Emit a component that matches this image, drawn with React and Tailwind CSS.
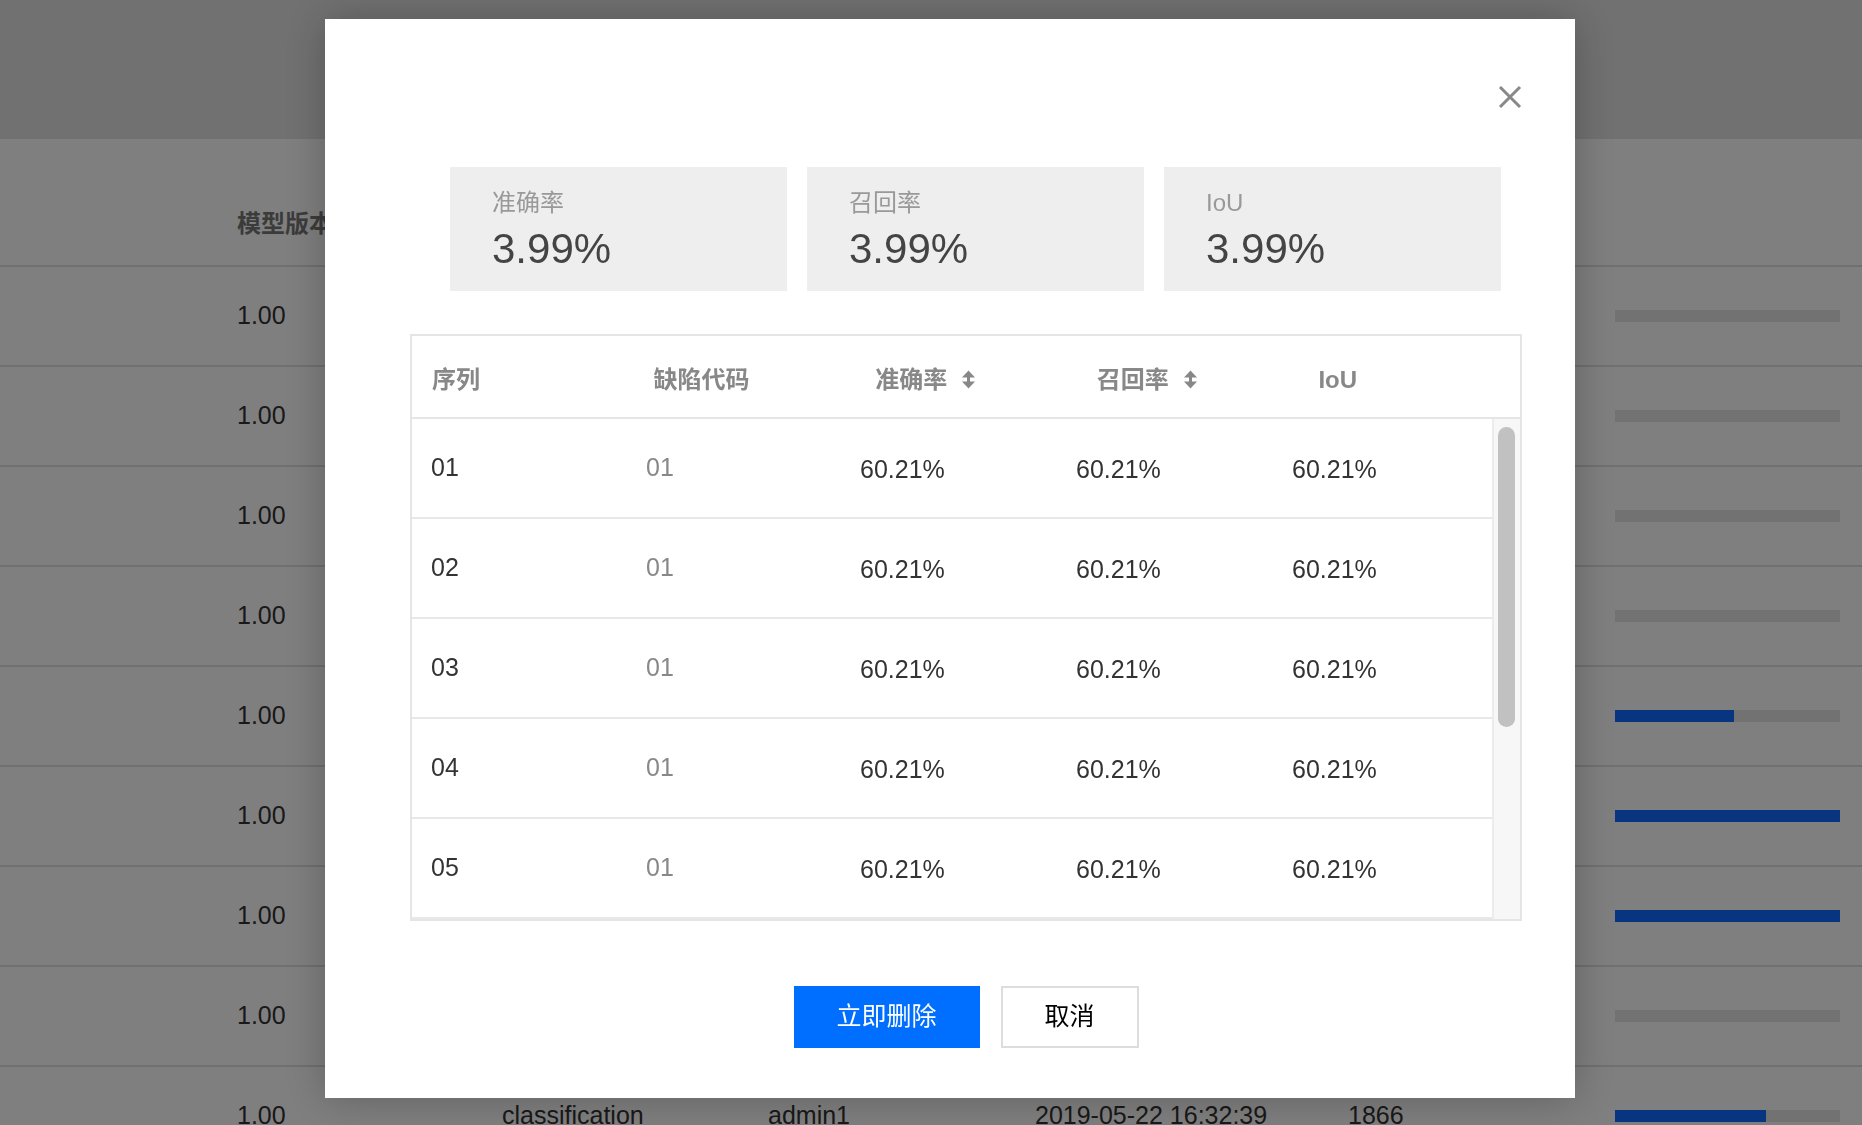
import React from 'react';

const bgRows = [
  { v: '1.00', bar: 0 },
  { v: '1.00', bar: 0 },
  { v: '1.00', bar: 0 },
  { v: '1.00', bar: 0 },
  { v: '1.00', bar: 53 },
  { v: '1.00', bar: 100 },
  { v: '1.00', bar: 100 },
  { v: '1.00', bar: 0 },
  { v: '1.00', bar: 67 },
];

const rows = ['01', '02', '03', '04', '05', '06', '07', '08'];

const SortIcon = () => (
  <svg width="13" height="19" viewBox="0 0 13 19" className="ml-[15px] shrink-0">
    <polygon points="0,7.5 6.5,0.5 13,7.5" fill="#888" />
    <rect x="5" y="6" width="3" height="7" fill="#888" />
    <polygon points="0,11.5 6.5,18.5 13,11.5" fill="#888" />
  </svg>
);

const StatCard = ({ label, value }) => (
  <div className="w-[337px] h-[124px] bg-[#eeeeee] pl-[42px] pt-[20px] flex flex-col">
    <div className="text-[24px] leading-[32px] text-[#999]">{label}</div>
    <div className="mt-[9px] text-[42px] leading-[42px] text-[#444]">{value}</div>
  </div>
);

const App = () => {
  return (
    <div
      className="relative w-full h-screen overflow-hidden bg-white"
      style={{ fontFamily: '"Liberation Sans", "Noto Sans CJK SC", sans-serif' }}
    >
      {/* page behind the dialog */}
      <div className="h-[139px] bg-[#e3e3e3]" />
      <div className="pt-[44px]">
        <div className="h-[84px] flex items-center pl-[237px] border-b-2 border-[#e0e0e0]">
          <span className="text-[24px] font-bold text-[#777]">模型版本</span>
        </div>
        {bgRows.map((r, i) => (
          <div key={i} className="h-[100px] flex items-center pl-[237px] border-b-2 border-[#e0e0e0] text-[25px] text-[#333]">
            <div className="w-[265px]">{r.v}</div>
            <div className="w-[266px]">classification</div>
            <div className="w-[267px]">admin1</div>
            <div className="w-[313px]">2019-05-22 16:32:39</div>
            <div className="w-[267px]">1866</div>
            <div className="w-[225px] h-[12px] bg-[#e5e5e5]">
              <div className="h-full bg-[#0e6bff]" style={{ width: `${r.bar}%` }} />
            </div>
          </div>
        ))}
      </div>

      {/* overlay + dialog */}
      <div className="fixed inset-0 bg-black/50">
        <div className="absolute left-[325px] top-[19px] w-[1250px] h-[1079px] bg-white shadow-[0_0_40px_rgba(0,0,0,0.25)] pt-[148px] pl-[85px] pr-[53px]">
          <button className="absolute top-[66px] right-[53px] w-[24px] h-[24px]">
            <svg width="24" height="24" viewBox="0 0 24 24">
              <path d="M2 2 L22 22 M22 2 L2 22" stroke="#888" strokeWidth="3" />
            </svg>
          </button>

          <div className="flex gap-[20px] ml-[40px]">
            <StatCard label="准确率" value="3.99%" />
            <StatCard label="召回率" value="3.99%" />
            <StatCard label="IoU" value="3.99%" />
          </div>

          <div className="mt-[43px] border-2 border-[#e5e5e5]">
            <div className="grid grid-cols-5 h-[83px] border-b-2 border-[#e5e5e5] text-[24px] font-bold text-[#888]">
              <div className="flex items-center pl-[20px] pt-[6px]">序列</div>
              <div className="flex items-center pl-[20px] pt-[6px]">缺陷代码</div>
              <div className="flex items-center pl-[20px] pt-[6px]">准确率<SortIcon /></div>
              <div className="flex items-center pl-[20px] pt-[6px]">召回率<SortIcon /></div>
              <div className="flex items-center pl-[20px] pt-[6px]">IoU</div>
            </div>
            <div className="flex h-[500px]">
              <div className="flex-1 overflow-hidden">
                {rows.map((n) => (
                  <div key={n} className="grid grid-cols-5 h-[100px] border-b-2 border-[#e8e8e8] text-[25px] text-[#333]">
                    <div className="flex items-center pl-[19px]">{n}</div>
                    <div className="flex items-center pl-[18px] text-[#888]">01</div>
                    <div className="flex items-center pl-[16px] pt-[4px]">60.21%</div>
                    <div className="flex items-center pl-[16px] pt-[4px]">60.21%</div>
                    <div className="flex items-center pl-[16px] pt-[4px]">60.21%</div>
                  </div>
                ))}
              </div>
              <div className="w-[28px] bg-[#f7f7f7] border-l-2 border-[#ececec] pl-[4px] pt-[8px]">
                <div className="w-[17px] h-[300px] rounded-full bg-[#c1c1c1]" />
              </div>
            </div>
          </div>

          <div className="mt-[65px] flex justify-center gap-[21px]">
            <button className="w-[186px] h-[62px] bg-[#006eff] text-white text-[25px]">立即删除</button>
            <button className="w-[138px] h-[62px] border-2 border-[#dddddd] bg-white text-[#000] text-[25px]">取消</button>
          </div>
        </div>
      </div>
    </div>
  );
};

export default App;
